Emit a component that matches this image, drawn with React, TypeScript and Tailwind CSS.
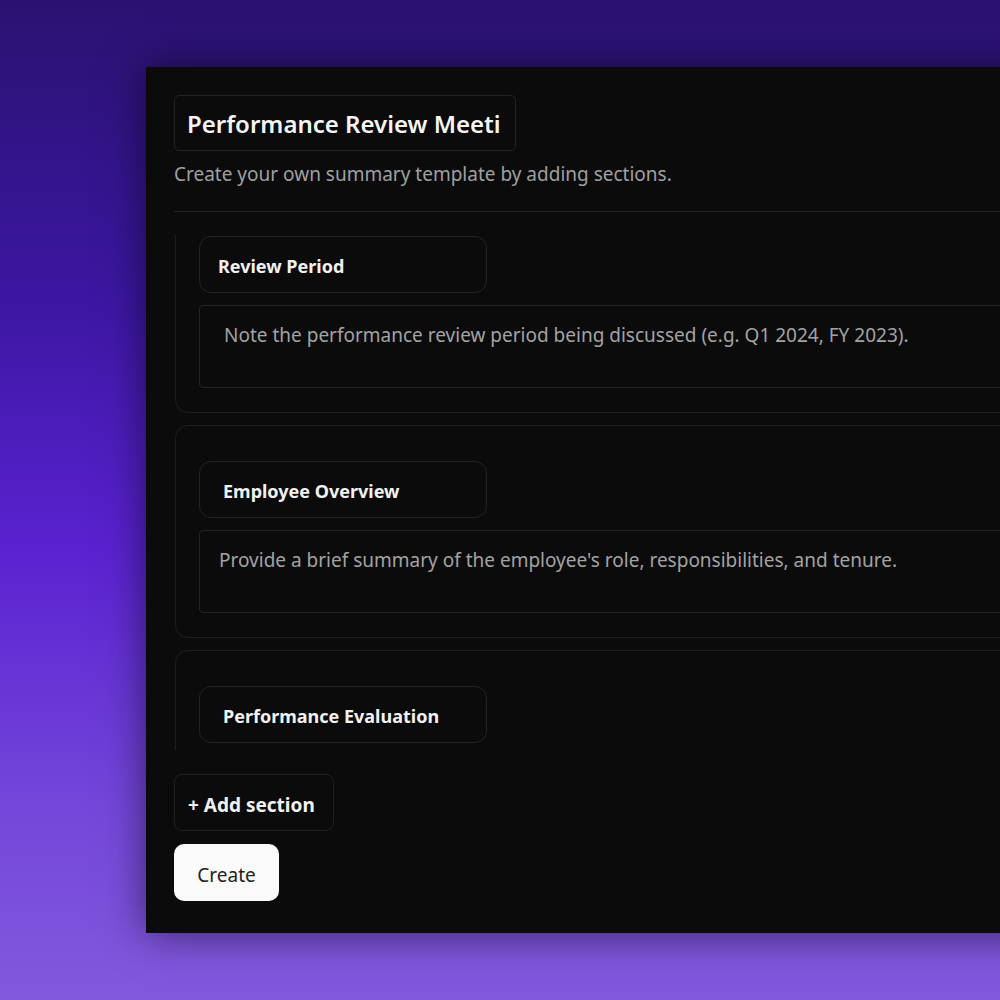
import React from "react";

const font = { fontFamily: '"Noto Sans", "Open Sans", sans-serif' };

function Section({ title, body, tpad, bpad }: { title: string; body: string; tpad: string; bpad: string }) {
  return (
    <div className="rounded-[13px] border border-[#1f1f1f] pl-[23px] pt-[35px] pb-[24px] pr-0">
      <div className={`flex h-[57px] w-[288px] items-center rounded-[12px] border border-[#232323] ${tpad} pt-[4px] text-[18px] font-bold whitespace-nowrap text-[#f2f2f2]`}>
        {title}
      </div>
      <div className={`mt-[12px] h-[83px] rounded-[4px] border border-[#232323] ${bpad} pt-[15px] text-[19px] whitespace-nowrap text-[#a3a3a3]`}>
        {body}
      </div>
    </div>
  );
}

export default function App() {
  return (
    <div
      style={font}
      className="h-screen w-full overflow-hidden bg-[linear-gradient(to_bottom,#2a1270_0%,#3c17a2_30%,#5a22d0_55%,#7446da_80%,#8259dd_100%)] pl-[146px] pt-[67px]"
    >
      <div className="flex h-[866px] w-[1000px] flex-col bg-[#0b0b0b] pl-[28px] pt-[28px] shadow-[0_0_40px_rgba(0,0,0,0.55)]">
        <div className="flex h-[56px] w-[342px] items-center rounded-[5px] border border-[#222] px-[12px] pt-[2px] text-[24px] font-semibold whitespace-nowrap text-[#f5f5f5]">
          Performance Review Meeti
        </div>
        <div className="mt-[9px] text-[19px] text-[#a0a0a0]">Create your own summary template by adding sections.</div>
        <div className="mt-[22px] h-px w-full bg-[#222]" />
        <div className="mt-[23px] h-[515px] overflow-hidden">
          <div className="-mt-[35px] flex flex-col gap-[12px] pl-px">
            <Section
              title="Review Period"
              body="Note the performance review period being discussed (e.g. Q1 2024, FY 2023)."
              tpad="px-[18px]"
              bpad="px-[24px]"
            />
            <Section
              title="Employee Overview"
              body="Provide a brief summary of the employee's role, responsibilities, and tenure."
              tpad="px-[23px]"
              bpad="px-[19px]"
            />
            <Section
              title="Performance Evaluation"
              body="Summarize the employee's performance against goals and expectations."
              tpad="px-[23px]"
              bpad="px-[19px]"
            />
          </div>
        </div>
        <div className="mt-[24px] flex h-[57px] w-[160px] items-center whitespace-nowrap rounded-[8px] border border-[#202020] px-[13px] pt-[6px] text-[19px] font-bold text-[#f2f2f2]">
          + Add section
        </div>
        <div className="mt-[13px] flex h-[57px] w-[105px] items-center justify-center rounded-[10px] bg-[#fafafa] pt-[6px] text-[19px] text-[#222]">
          Create
        </div>
      </div>
    </div>
  );
}
